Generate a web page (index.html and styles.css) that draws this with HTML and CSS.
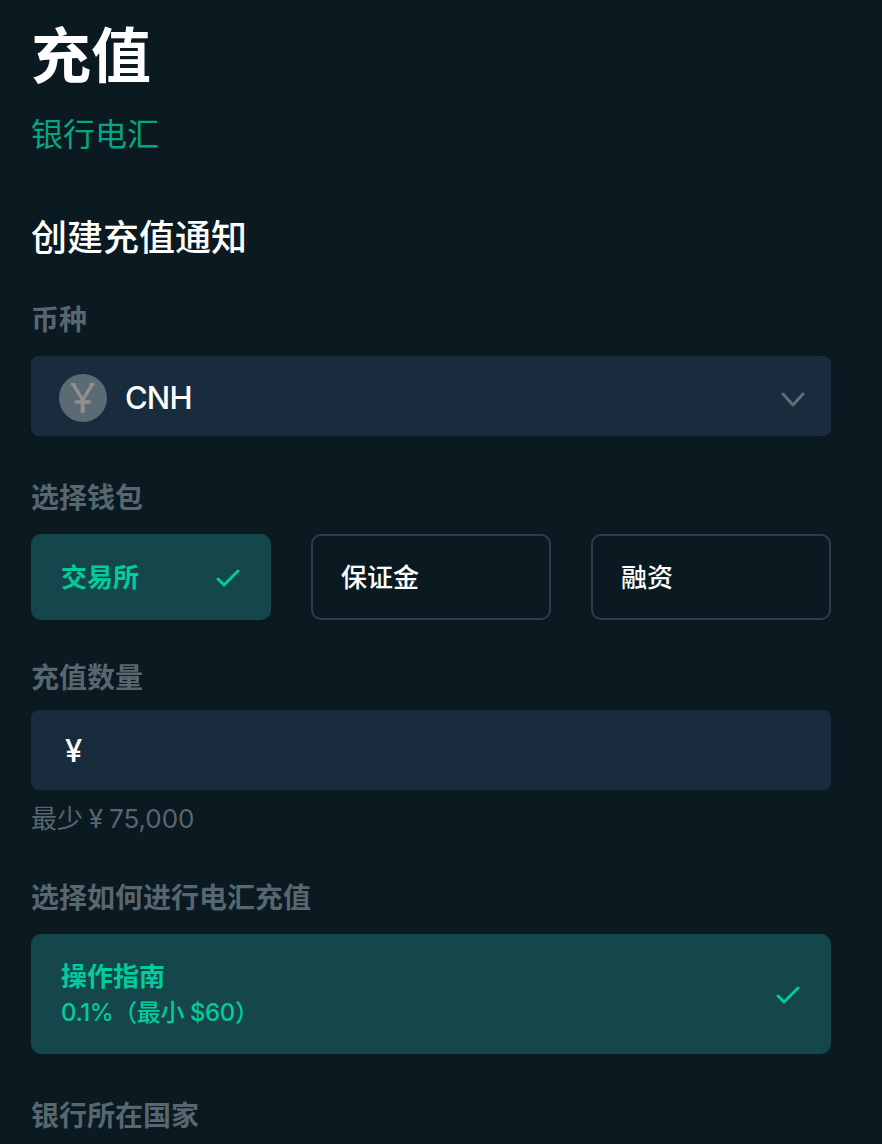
FILE: index.html
```
<!DOCTYPE html>
<html lang="zh-CN">
<head>
    <meta charset="UTF-8">
    <meta name="viewport" content="width=device-width, initial-scale=1.0">
    <title>充值</title>
    <link rel="stylesheet" href="styles.css">
</head>
<body>
    <main class="deposit">
        <h1>充值</h1>
        <p class="method">银行电汇</p>
        <h2>创建充值通知</h2>

        <form>
            <div class="form-group">
                <div class="label">币种</div>
                <div class="field select">
                    <svg class="coin" viewBox="0 0 48 48">
                        <circle cx="24" cy="24" r="24" fill="#5b6b73"/>
                        <g fill="none" stroke="#938e8f">
                            <path d="M11.700 10h5M30.700 10h5" stroke-width="2"/>
                            <path d="M14 9.800l9.700 16 9.900-16M15.700 28h16" stroke-width="3.300"/>
                            <path d="M23.700 24v14.700" stroke-width="4"/>
                        </g>
                    </svg>
                    <span class="currency">CNH</span>
                    <svg class="chevron" viewBox="0 0 24 16">
                        <path d="M2 2l10 11L22 2" fill="none" stroke="#5f6e76" stroke-width="3" stroke-linecap="round" stroke-linejoin="round"/>
                    </svg>
                </div>
            </div>

            <div class="form-group wallets-group">
                <div class="label">选择钱包</div>
                <div class="wallets">
                    <div class="option active">
                        <span>交易所</span>
                        <svg class="check" viewBox="0 0 24 18">
                            <path d="M2 10l6 6L22 2" fill="none" stroke="#01cc9c" stroke-width="2.900" stroke-linecap="round" stroke-linejoin="round"/>
                        </svg>
                    </div>
                    <div class="option"><span>保证金</span></div>
                    <div class="option"><span>融资</span></div>
                </div>
            </div>

            <div class="form-group">
                <div class="label">充值数量</div>
                <div class="field amount">¥</div>
                <p class="hint">最少 ¥ 75,000</p>
            </div>

            <div class="form-group">
                <div class="label">选择如何进行电汇充值</div>
                <div class="option guide active">
                    <div>
                        <span class="guide-title">操作指南</span>
                        <span class="guide-fee">0.1%（最小 $60）</span>
                    </div>
                    <svg class="check" viewBox="0 0 24 18">
                        <path d="M2 10l6 6L22 2" fill="none" stroke="#01cc9c" stroke-width="2.900" stroke-linecap="round" stroke-linejoin="round"/>
                    </svg>
                </div>
            </div>

            <div class="label">银行所在国家</div>
        </form>
    </main>
</body>
</html>
```
FILE: styles.css
```
* {
    margin: 0;
    padding: 0;
    box-sizing: border-box;
}

body {
    height: 1144px;
    overflow: hidden;
    background-color: #0b1921;
    color: #fff;
    font-family: Inter, "Noto Sans CJK SC", sans-serif;
}

.deposit {
    width: 831px;
    padding: 20px 0 0 31px;
}

h1 {
    font-size: 60px;
    line-height: 72px;
    font-weight: 700;
    margin-bottom: 23px;
}

.method {
    color: #03a781;
    font-size: 32px;
    line-height: 40px;
    margin-bottom: 61px;
}

h2 {
    font-size: 36px;
    line-height: 44px;
    font-weight: 500;
    margin-bottom: 44px;
}

.form-group {
    margin-bottom: 46px;
}

.wallets-group {
    margin-bottom: 42px;
}

.label {
    color: #57676f;
    font-size: 28px;
    line-height: 32px;
    font-weight: 600;
    margin-bottom: 20px;
}

.field {
    display: flex;
    align-items: center;
    height: 80px;
    padding: 0 28px;
    border-radius: 8px;
    background-color: #182c3d;
}

.coin {
    width: 48px;
    height: 48px;
    margin: 4px 18px 0 0;
}

.currency {
    font-size: 31px;
    font-weight: 450;
    letter-spacing: -0.900px;
    margin-top: 3px;
}

.chevron {
    width: 24px;
    height: 16px;
    margin: 7px -2px 0 auto;
}

.wallets {
    display: grid;
    grid-template-columns: repeat(3, 1fr);
    gap: 40px;
}

.option {
    display: flex;
    align-items: center;
    justify-content: space-between;
    height: 86px;
    padding: 0 28px;
    border: 2px solid #2c3e4c;
    border-radius: 10px;
    font-size: 26px;
    font-weight: 500;
}

.wallets .option span {
    margin-bottom: 4px;
}

.option.active {
    border-color: #14464b;
    background-color: #14464b;
    color: #01cc9c;
    font-weight: 700;
}

.check {
    width: 24px;
    height: 18px;
    margin: 1px 1px 0 0;
}

.amount {
    margin-top: -4px;
    padding: 0 34px;
    font-size: 31px;
    font-weight: 500;
}

.hint {
    margin-top: 13px;
    padding-bottom: 1px;
    color: #57676f;
    font-size: 26px;
    line-height: 32px;
    word-spacing: -1.500px;
}

.option.guide {
    height: 120px;
}

.guide-title,
.guide-fee {
    display: block;
    line-height: 36px;
    position: relative;
    top: 1px;
}

.guide-fee {
    font-size: 24px;
    font-weight: 450;
    letter-spacing: -0.400px;
}
```
